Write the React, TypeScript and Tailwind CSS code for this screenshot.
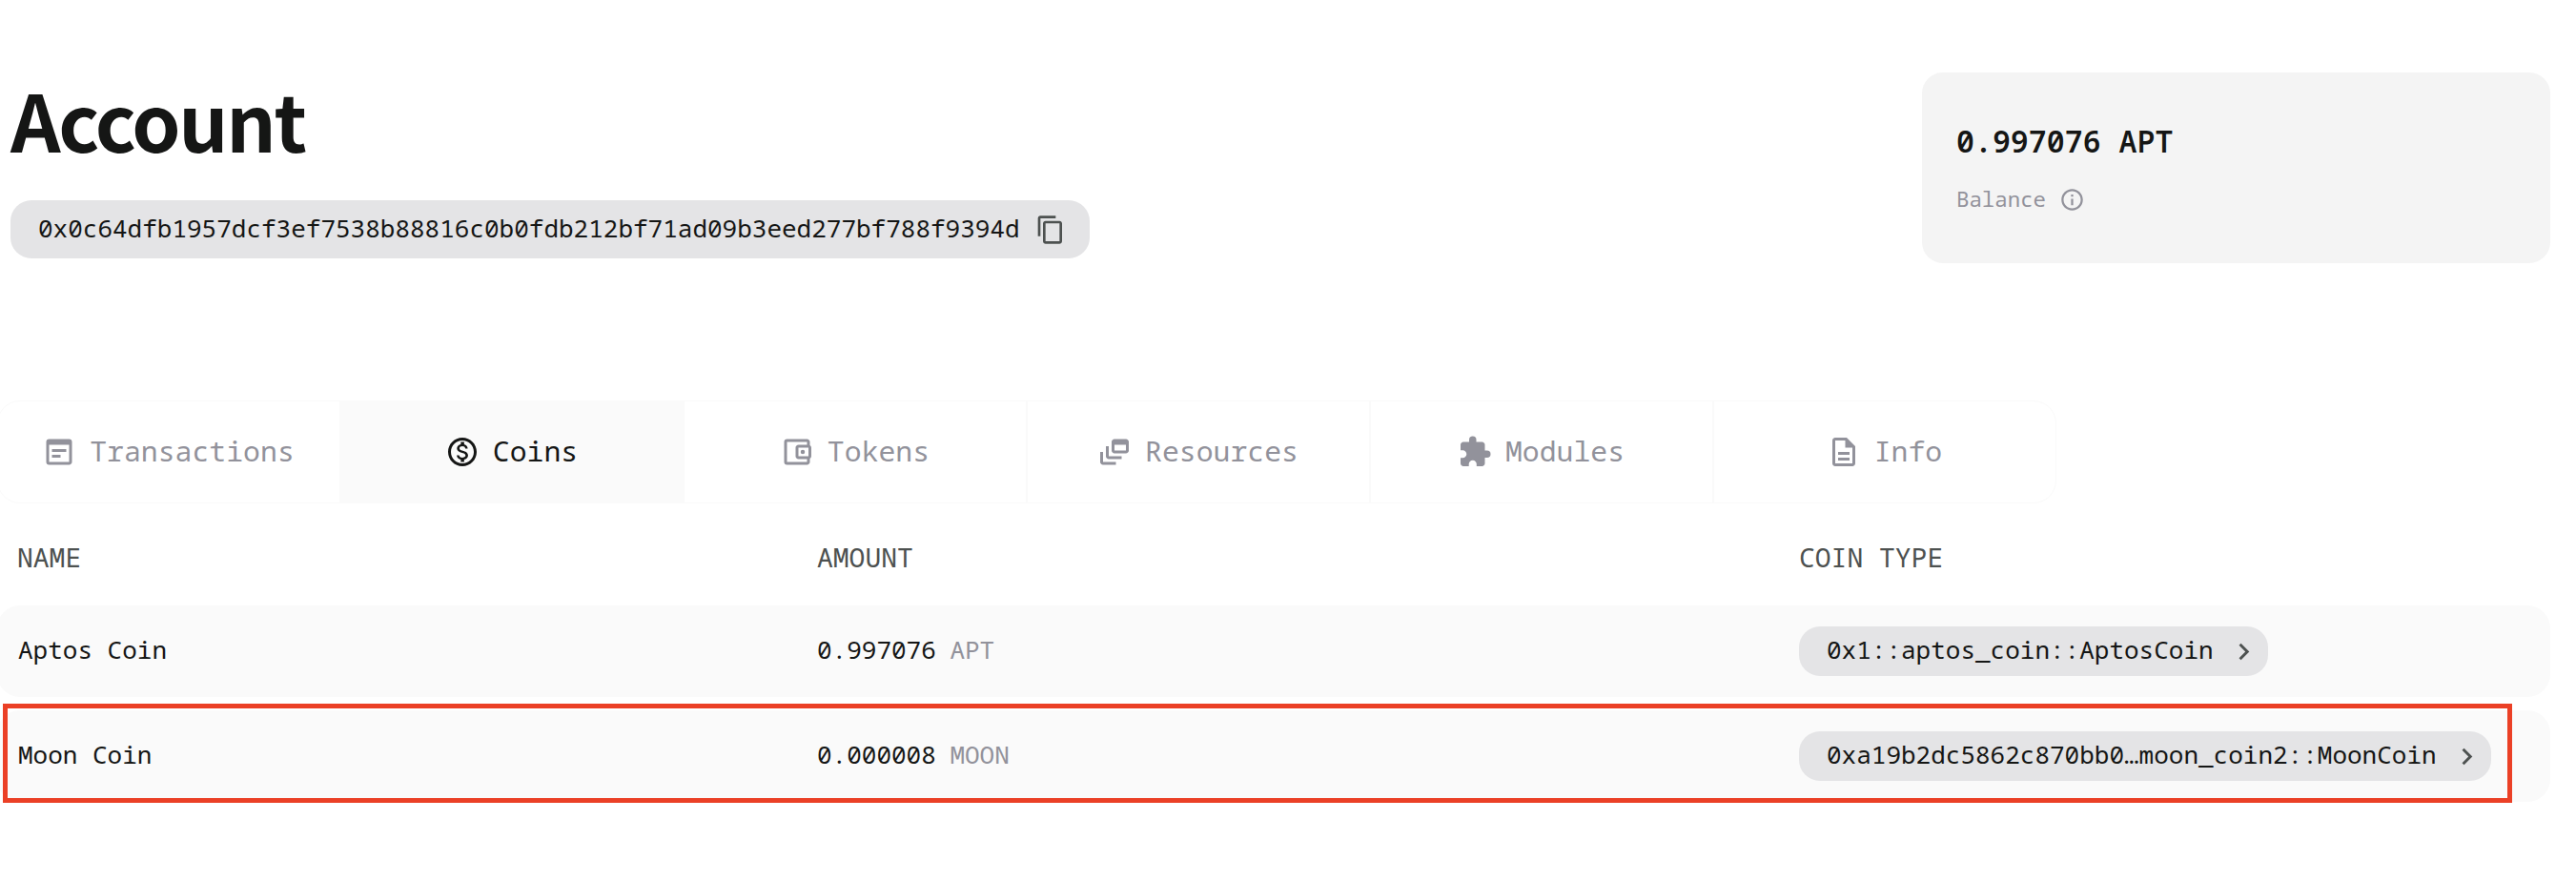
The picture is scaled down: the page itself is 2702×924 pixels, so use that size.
import type { ReactNode } from "react";
import type { IconType } from "react-icons";
import {
  MdContentCopy,
  MdOutlineInfo,
  MdWysiwyg,
  MdOutlineMonetizationOn,
  MdOutlineAccountBalanceWallet,
  MdOutlineDynamicFeed,
  MdExtension,
  MdOutlineDescription,
  MdChevronRight,
} from "react-icons/md";

const tabs: { label: string; Icon: IconType; active?: boolean }[] = [
  { label: "Transactions", Icon: MdWysiwyg },
  { label: "Coins", Icon: MdOutlineMonetizationOn, active: true },
  { label: "Tokens", Icon: MdOutlineAccountBalanceWallet },
  { label: "Resources", Icon: MdOutlineDynamicFeed },
  { label: "Modules", Icon: MdExtension },
  { label: "Info", Icon: MdOutlineDescription },
];

const coins = [
  { name: "Aptos Coin", amount: "0.997076", symbol: "APT", type: "0x1::aptos_coin::AptosCoin" },
  { name: "Moon Coin", amount: "0.000008", symbol: "MOON", type: "0xa19b2dc5862c870bb0…moon_coin2::MoonCoin" },
];

function Columns({ children, className }: { children: ReactNode; className: string }) {
  return (
    <div className={`grid grid-cols-[839px_1030px_1fr] items-center pl-[21px] ${className}`}>{children}</div>
  );
}

export default function App() {
  return (
    <div className="h-[924px] w-[2702px] overflow-hidden bg-white font-['Noto_Sans_Mono','Liberation_Mono',monospace] text-[26px] text-[#151615]">
      <header className="flex h-[420px] items-start justify-between pl-[11px] pr-[27px] pt-[70px]">
        <div>
          <h1 className="h-[140px] font-['Noto_Sans_CJK_SC',sans-serif] text-[82px] leading-[110px] font-bold tracking-[-2.3px]">Account</h1>
          <div className="flex h-[61px] w-[1132px] items-center rounded-[22px] bg-[#e4e4e6] pl-[29px]">
            <span className="pb-[2px]">0x0c64dfb1957dcf3ef7538b88816c0b0fdb212bf71ad09b3eed277bf788f9394d</span>
            <MdContentCopy className="ml-4 size-8 text-[#4d5150]" />
          </div>
        </div>
        <section className="mt-[6px] flex h-[200px] w-[659px] flex-col rounded-[22px] bg-[#f4f4f4] pl-9 pt-[52px]">
          <div className="text-[31.6px] leading-[40px] font-semibold">0.997076 APT</div>
          <div className="mt-[26px] flex items-center text-[22.4px] leading-[30px] text-[#92929b]">
            Balance
            <MdOutlineInfo className="ml-[14px] size-[27px]" />
          </div>
        </section>
      </header>

      <nav className="-ml-[3px] flex h-[108px] w-[2160px] overflow-hidden rounded-[24px] border border-[#fafafa]">
        {tabs.map(({ label, Icon, active }) => (
          <div
            key={label}
            className={`flex flex-1 items-center justify-center gap-[14px] border-r-2 border-[#fafafa] pr-[1px] text-[29.8px] last:border-r-0 ${
              active ? "bg-[#fafafa] text-[#151615]" : "text-[#92929b]"
            }`}
          >
            <Icon className="size-9" />
            <span className="pb-[1px]">{label}</span>
          </div>
        ))}
      </nav>

      <main className="-ml-[3px] w-[2678px]">
        <Columns className="h-[107px] pt-[5px] text-[28px] text-[#4d5150]">
          <span>NAME</span>
          <span>AMOUNT</span>
          <span>COIN TYPE</span>
        </Columns>
        <div className="relative flex flex-col gap-[14px]">
          {coins.map((coin) => (
            <Columns key={coin.name} className="h-24 rounded-[24px] bg-[#fafafa]">
              <span className="pb-[3px] pl-[1px]">{coin.name}</span>
              <span className="pb-[3px]">
                {coin.amount} <span className="-ml-[1px] text-[#92929b]">{coin.symbol}</span>
              </span>
              <div className="flex h-[52px] w-fit items-center rounded-[22px] bg-[#e4e4e6] pl-[29px] pr-2">
                <span className="pb-[3px]">{coin.type}</span>
                <MdChevronRight className="ml-[14px] size-[35px] text-[#4d5150]" />
              </div>
            </Columns>
          ))}
          <div className="absolute left-[6px] top-[103px] h-[104px] w-[2632px] border-[5px] border-[#eb4026]" />
        </div>
      </main>
    </div>
  );
}
